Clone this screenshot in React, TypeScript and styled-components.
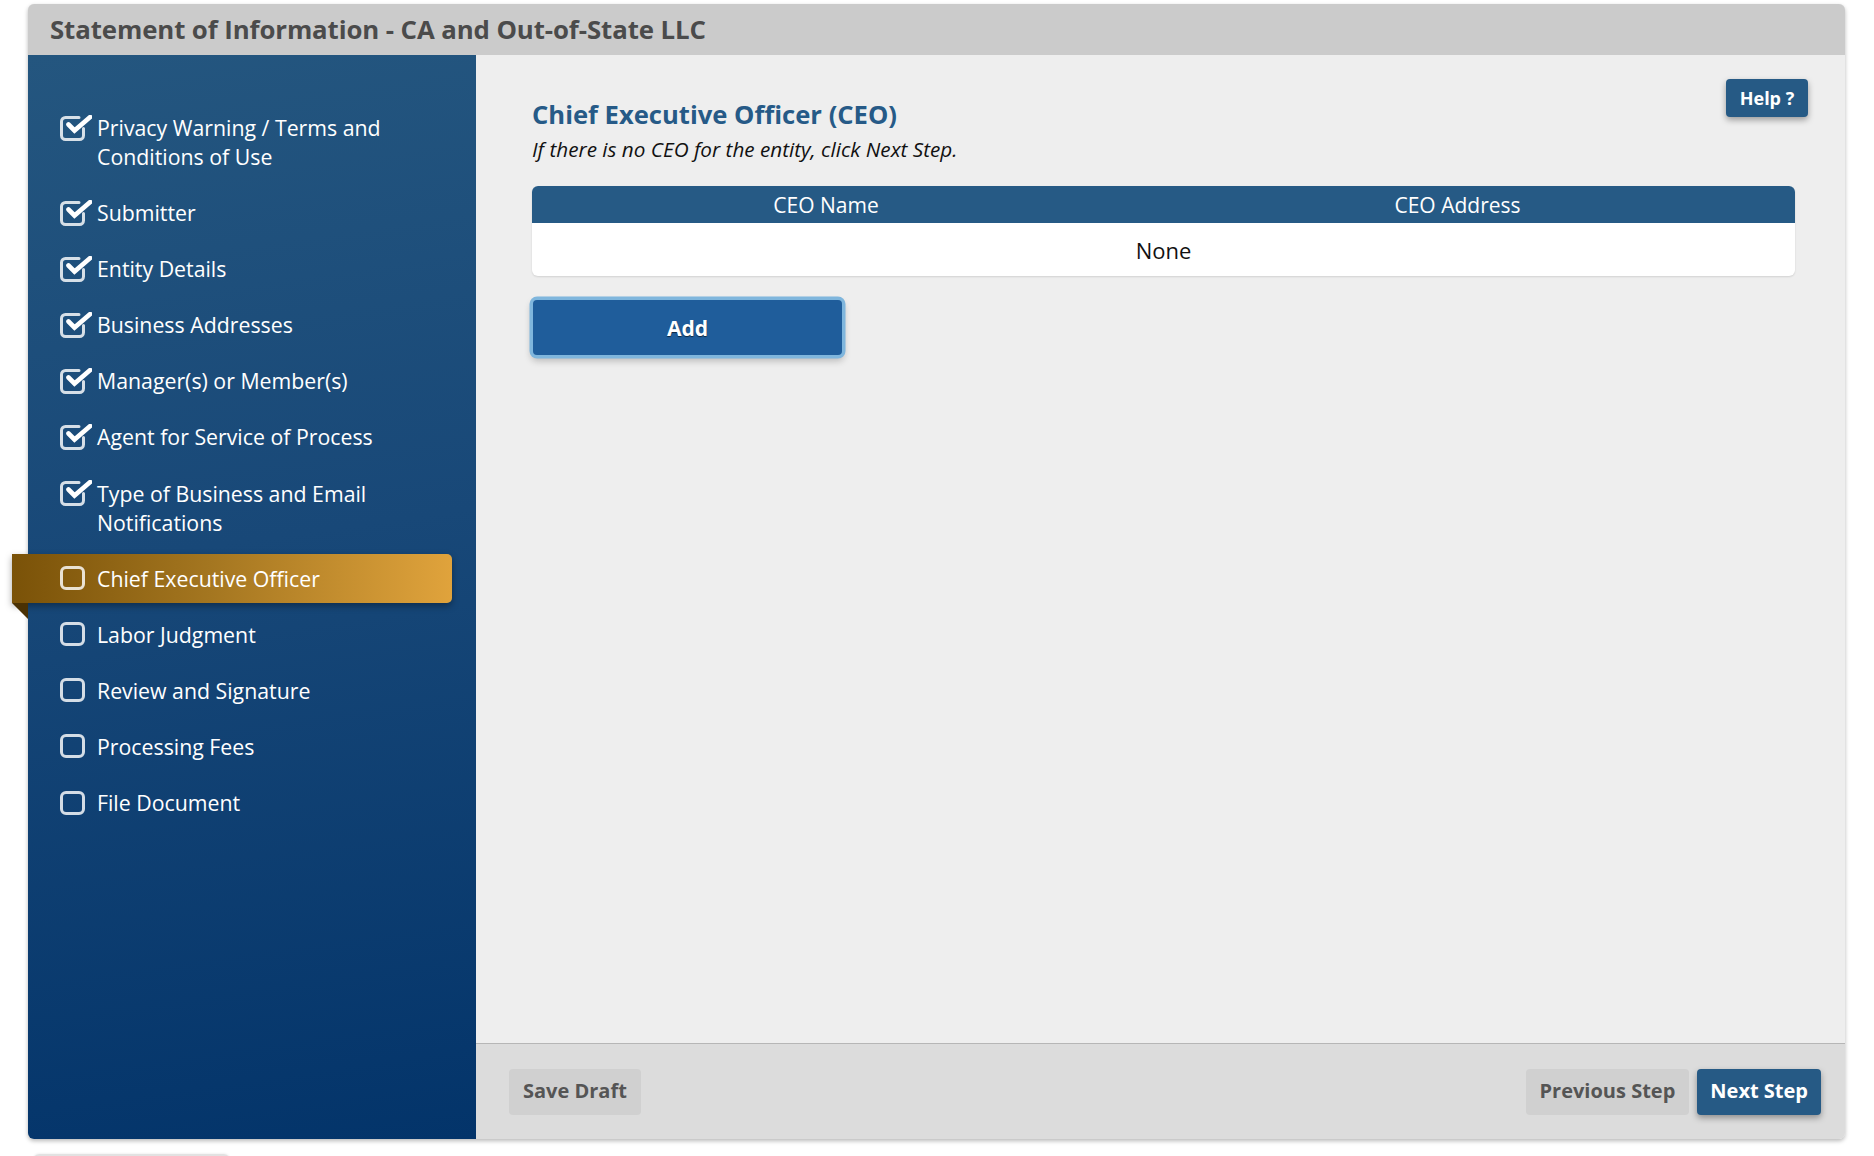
import React from "react";
import styled, { createGlobalStyle, css } from "styled-components";

const GlobalStyle = createGlobalStyle`
  html, body {
    margin: 0;
    padding: 0;
    background: #ffffff;
    overflow: hidden;
  }
  body {
    font-family: "Open Sans", "Noto Sans", Arial, sans-serif;
    -webkit-font-smoothing: antialiased;
  }
  * { box-sizing: border-box; }
`;

const Page = styled.div`
  padding: 4px 29px 0 28px;
  height: 1156px;
`;

const Card = styled.div`
  display: flex;
  flex-direction: column;
  width: 1817px;
  height: 1135px;
  border-radius: 6px;
  box-shadow: 0 2px 4px rgba(0, 0, 0, 0.28);
  background: #eeeeee;
`;

const Header = styled.header`
  display: flex;
  align-items: center;
  height: 51px;
  padding: 0 22px 2px;
  background: #cbcbcb;
  border-radius: 6px 6px 0 0;
`;

const Title = styled.h1`
  margin: 0;
  font-size: 25.8px;
  font-weight: 700;
  color: #4b4b4b;
  letter-spacing: -0.1px;
`;

const Body = styled.div`
  flex: 1;
  display: grid;
  grid-template-columns: 448px 1fr;
  min-height: 0;
`;

const Sidebar = styled.nav`
  background: linear-gradient(172deg, #24567f 0%, #184878 45%, #03346a 100%);
  border-radius: 0 0 0 6px;
  padding-top: 48px;
`;

const StepList = styled.ul`
  list-style: none;
  margin: 0;
  padding: 0;
  display: flex;
  flex-direction: column;
  gap: 7.1px;
`;

const StepItem = styled.li<{ $active?: boolean }>`
  position: relative;
  display: flex;
  align-items: flex-start;
  width: 440px;
  margin-left: -16px;
  padding: 10px 20px 10px 48px;
  border-radius: 0 5px 5px 0;
  color: #ffffff;
  font-size: 21.3px;
  line-height: 29px;
  ${(p) =>
    p.$active &&
    css`
      background: linear-gradient(90deg, #7a5208 0%, #a47620 45%, #e0a33c 100%);
      box-shadow: 0 3px 7px rgba(0, 0, 0, 0.35);
      &::after {
        content: "";
        position: absolute;
        left: 0;
        top: 100%;
        border-top: 16px solid #4a3104;
        border-left: 16px solid transparent;
      }
    `}
`;

const IconSlot = styled.span`
  flex: 0 0 37px;
  height: 29px;
  display: flex;
  align-items: center;
`;

const StepLabel = styled.span`
  flex: 1;
`;

const Main = styled.main`
  display: flex;
  flex-direction: column;
  background: #eeeeee;
  border-radius: 0 0 6px 0;
`;

const Content = styled.section`
  flex: 1;
  padding: 43px 50px 0 56px;
`;

const HelpButton = styled.button`
  float: right;
  margin: -19px -13px 0 0;
  width: 82px;
  height: 38px;
  border: none;
  border-radius: 4px;
  background: #265a85;
  color: #ffffff;
  font-family: inherit;
  font-size: 18px;
  font-weight: 700;
  box-shadow: 0 3px 6px rgba(0, 0, 0, 0.35);
`;

const Heading = styled.h2`
  margin: 0;
  font-size: 25.6px;
  line-height: 34px;
  font-weight: 700;
  color: #265a87;
`;

const Hint = styled.p`
  margin: 4px 0 0;
  font-size: 20.7px;
  line-height: 26px;
  font-style: italic;
  color: #111111;
`;

const Table = styled.div`
  margin-top: 24px;
  display: grid;
  grid-template-columns: 588px 1fr;
  border-radius: 6px;
  background: #ffffff;
  box-shadow: 0 1px 2px rgba(0, 0, 0, 0.12);
  overflow: hidden;
`;

const HeadCell = styled.div`
  height: 37px;
  display: flex;
  align-items: center;
  justify-content: center;
  background: #265a85;
  color: #ffffff;
  font-size: 21px;
`;

const EmptyCell = styled.div`
  grid-column: 1 / -1;
  height: 53px;
  display: flex;
  align-items: center;
  justify-content: center;
  font-size: 22px;
  color: #111111;
`;

const AddButton = styled.button`
  display: block;
  margin: 24px 0 0 1px;
  width: 309px;
  height: 55px;
  border: none;
  border-radius: 4px;
  background: #1f5d9b;
  color: #ffffff;
  font-family: inherit;
  font-size: 21px;
  font-weight: 700;
  text-shadow: 0 1px 1px rgba(0, 0, 0, 0.6);
  box-shadow: 0 0 0 3.5px #7fb6dd, 0 4px 7px 2px rgba(0, 0, 0, 0.22);
`;

const Footer = styled.footer`
  height: 96px;
  display: flex;
  align-items: flex-start;
  gap: 8px;
  padding: 25px 24px 0 33px;
  background: #dcdcdc;
  border-top: 1px solid #b6b6b6;
  border-radius: 0 0 6px 0;
`;

const FooterButton = styled.button<{ $primary?: boolean; $push?: boolean }>`
  height: 46px;
  padding: 0 14px 3px;
  border: none;
  border-radius: 4px;
  font-family: inherit;
  font-size: 20px;
  font-weight: 700;
  background: #d0d0d0;
  color: #555555;
  ${(p) => p.$push && css`margin-left: auto;`}
  ${(p) =>
    p.$primary &&
    css`
      padding: 0 13px 3px;
      background: #265a85;
      color: #ffffff;
      box-shadow: 0 3px 6px rgba(0, 0, 0, 0.35);
    `}
`;

const NextCard = styled.div`
  width: 197px;
  height: 10px;
  margin: 15px 0 0 5px;
  border-radius: 6px 6px 0 0;
  border-top: 2px solid #e2e2e2;
  box-shadow: 0 -1px 2px rgba(0, 0, 0, 0.05);
`;

const CheckedIcon = () => (
  <svg width="32" height="26" viewBox="0 0 32 26" fill="none">
    <path
      d="M19 2.5 H5.5 A4 4 0 0 0 1.5 6.5 V20.5 A4 4 0 0 0 5.5 24.5 H19.5 A4 4 0 0 0 23.5 20.5 V13.5"
      stroke="rgba(255,255,255,0.82)"
      strokeWidth="3"
      strokeLinecap="round"
    />
    <path
      d="M8.5 9.5 L14.5 15.5 L30.2 2"
      stroke="#ffffff"
      strokeWidth="4.6"
      strokeLinejoin="miter"
      strokeLinecap="round"
    />
  </svg>
);

const EmptyIcon = () => (
  <svg width="25" height="24" viewBox="0 0 25 24" fill="none">
    <rect
      x="1.5"
      y="1.5"
      width="22"
      height="21"
      rx="4.5"
      stroke="rgba(255,255,255,0.82)"
      strokeWidth="3"
    />
  </svg>
);

type Step = { label: React.ReactNode; done: boolean; active?: boolean };

const steps: Step[] = [
  { label: <>Privacy Warning / Terms and<br />Conditions of Use</>, done: true },
  { label: "Submitter", done: true },
  { label: "Entity Details", done: true },
  { label: "Business Addresses", done: true },
  { label: "Manager(s) or Member(s)", done: true },
  { label: "Agent for Service of Process", done: true },
  { label: <>Type of Business and Email<br />Notifications</>, done: true },
  { label: "Chief Executive Officer", done: false, active: true },
  { label: "Labor Judgment", done: false },
  { label: "Review and Signature", done: false },
  { label: "Processing Fees", done: false },
  { label: "File Document", done: false },
];

export default function App() {
  return (
    <>
      <GlobalStyle />
      <Page>
        <Card>
          <Header>
            <Title>Statement of Information - CA and Out-of-State LLC</Title>
          </Header>
          <Body>
            <Sidebar>
              <StepList>
                {steps.map((s, i) => (
                  <StepItem key={i} $active={s.active}>
                    <IconSlot>{s.done ? <CheckedIcon /> : <EmptyIcon />}</IconSlot>
                    <StepLabel>{s.label}</StepLabel>
                  </StepItem>
                ))}
              </StepList>
            </Sidebar>
            <Main>
              <Content>
                <HelpButton>Help ?</HelpButton>
                <Heading>Chief Executive Officer (CEO)</Heading>
                <Hint>If there is no CEO for the entity, click Next Step.</Hint>
                <Table>
                  <HeadCell>CEO Name</HeadCell>
                  <HeadCell>CEO Address</HeadCell>
                  <EmptyCell>None</EmptyCell>
                </Table>
                <AddButton>Add</AddButton>
              </Content>
              <Footer>
                <FooterButton>Save Draft</FooterButton>
                <FooterButton $push>Previous Step</FooterButton>
                <FooterButton $primary>Next Step</FooterButton>
              </Footer>
            </Main>
          </Body>
        </Card>
        <NextCard />
      </Page>
    </>
  );
}
